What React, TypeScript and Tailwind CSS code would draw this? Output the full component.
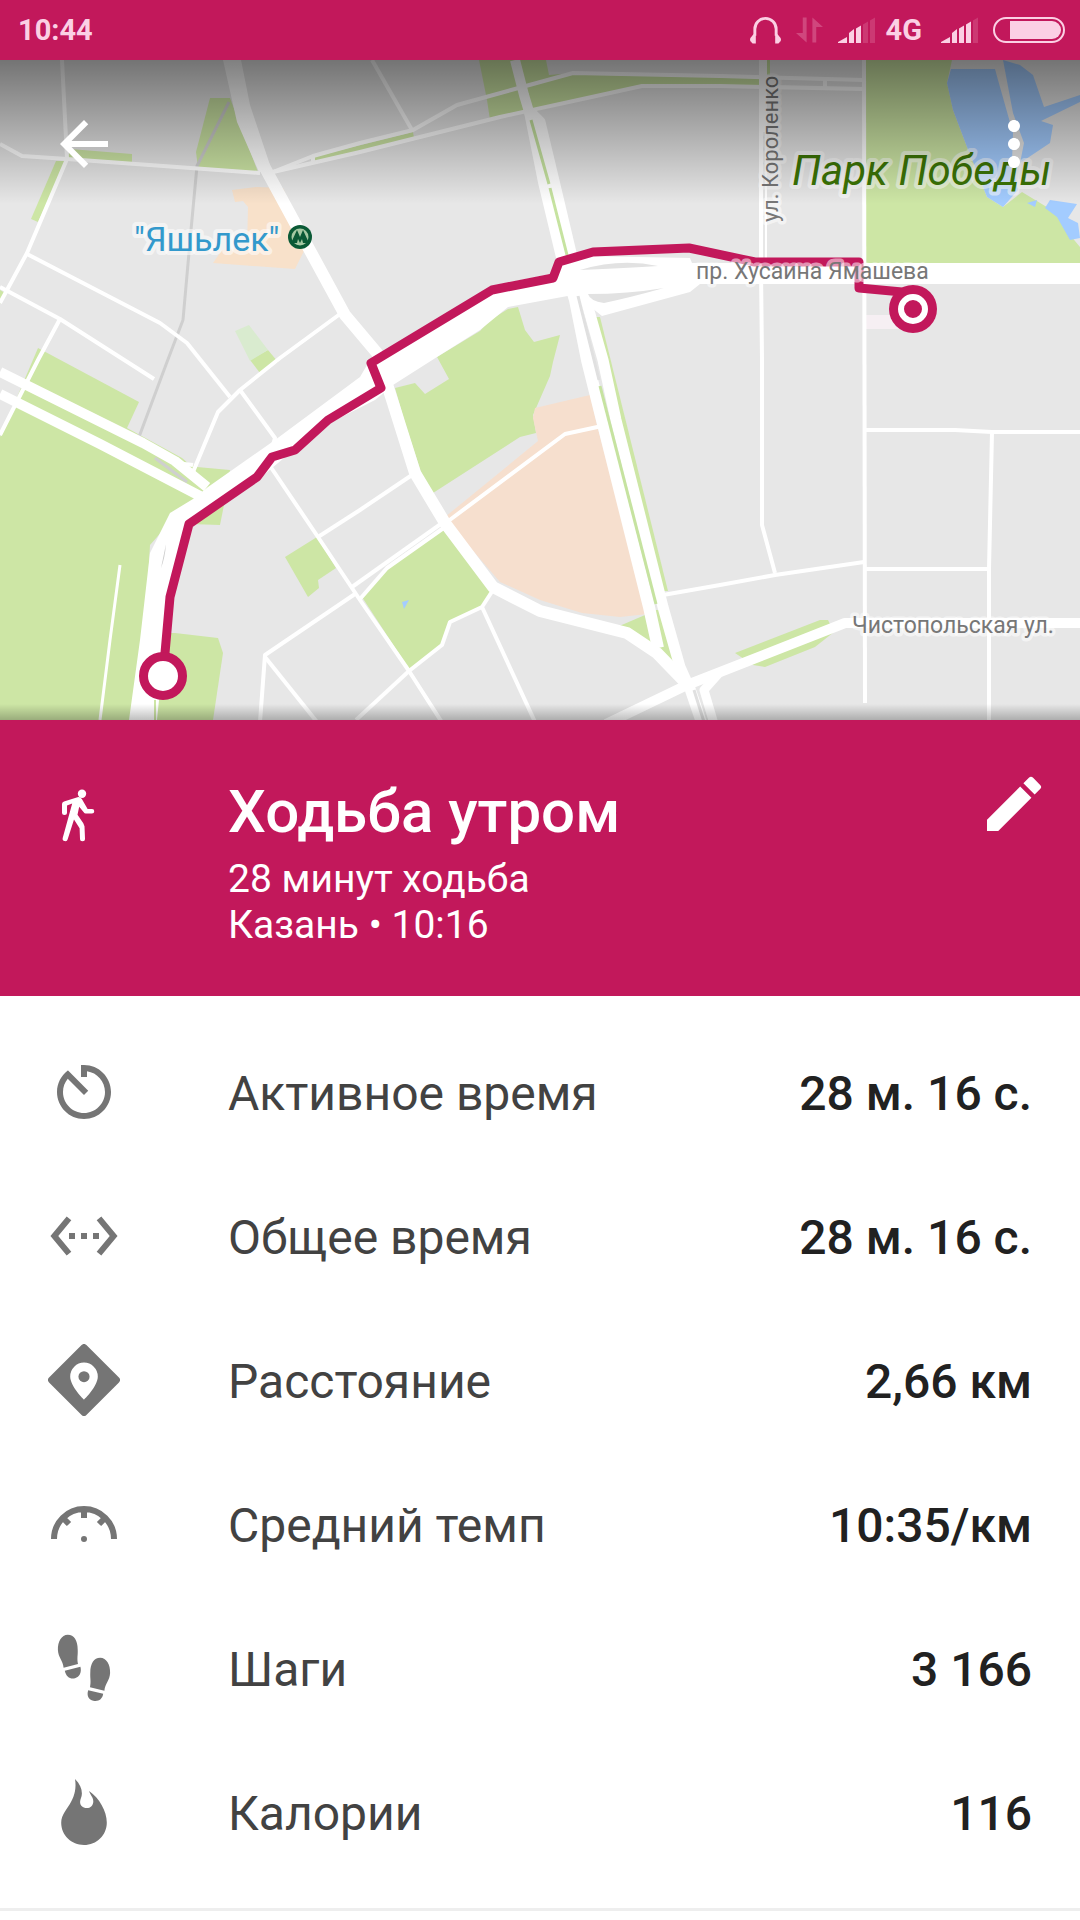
import React from 'react';
import { MdArrowBack, MdEdit, MdMoreVert } from 'react-icons/md';

type IconProps = { className?: string };

type Stat = {
	label: string;
	value: string;
	Icon: React.FC<IconProps>;
};

const TimerIcon = ({ className }: IconProps) => (
	<svg viewBox="0 0 24 24" fill="currentColor" className={className} aria-hidden="true">
		<path d="M11 3v4h2V5.08c3.39.49 6 3.39 6 6.92 0 3.87-3.13 7-7 7s-7-3.13-7-7c0-1.68.59-3.22 1.58-4.42L12 13l1.41-1.41-6.8-6.8v.02C4.42 6.45 3 9.05 3 12c0 4.97 4.02 9 9 9 4.97 0 9-4.03 9-9s-4.03-9-9-9h-1z" />
	</svg>
);

const DurationIcon = ({ className }: IconProps) => (
	<svg viewBox="0 0 24 24" fill="currentColor" className={className} aria-hidden="true">
		<path d="M7.77 6.76L6.23 5.48.82 12l5.41 6.52 1.54-1.28L3.42 12l4.35-5.24zM7 13h2v-2H7v2zm10-2h-2v2h2v-2zm-6 2h2v-2h-2v2zm6.77-7.52l-1.54 1.28L20.58 12l-4.35 5.24 1.54 1.28L23.18 12l-5.41-6.52z" />
	</svg>
);

const DistanceIcon = ({ className }: IconProps) => (
	<svg viewBox="0 0 24 24" fill="currentColor" className={className} aria-hidden="true">
		<path
			fillRule="evenodd"
			d="M11.2.35a1.15 1.15 0 0 1 1.6 0L23.65 11.2a1.15 1.15 0 0 1 0 1.6L12.8 23.65a1.15 1.15 0 0 1-1.6 0L.35 12.8a1.15 1.15 0 0 1 0-1.6zM12 6.2a4.6 4.6 0 0 0-4.6 4.6c0 3.3 4.6 7.7 4.6 7.7s4.6-4.4 4.6-7.7A4.6 4.6 0 0 0 12 6.2z"
		/>
		<circle cx="12" cy="10.9" r="1.85" />
	</svg>
);

const PaceIcon = ({ className }: IconProps) => (
	<svg
		viewBox="0 0 24 24"
		fill="none"
		stroke="currentColor"
		strokeWidth="2"
		className={className}
		aria-hidden="true"
	>
		<path d="M2 17a10 10 0 0 1 20 0M12 7v3M5 10l2 2M19 10l-2 2" />
		<circle cx="12" cy="17" r="1" fill="currentColor" stroke="none" />
	</svg>
);

const StepsIcon = ({ className }: IconProps) => (
	<svg viewBox="0 0 24 24" fill="currentColor" className={className} aria-hidden="true">
		<path d="M6.6.9C4.5.9 3.2 3.2 3.3 6c.1 2.5 1.700 3.5 1.900 5.900L10 10.700C9.600 8.700 10 7.800 9.900 5.800 9.900 2.900 8.700.9 6.600.9z" />
		<path d="M5.600 12.900l5.200-1.300c.5 1.900-.3 3.400-1.800 3.800-1.600.4-3-.5-3.400-2.500z" />
		<path d="M17.400 8.600c2.100 0 3.400 2.300 3.300 5.100-.1 2.500-1.700 3.500-1.900 5.900L14 18.400c.4-2 0-2.900.1-4.900 0-2.900 1.200-4.900 3.300-4.900z" />
		<path d="M18.400 20.600l-5-1.200c-.6 1.800.2 3.200 1.700 3.500 1.600.4 3-.4 3.300-2.300z" />
	</svg>
);

const CaloriesIcon = ({ className }: IconProps) => (
	<svg viewBox="0 0 24 24" fill="currentColor" className={className} aria-hidden="true">
		<path d="M9 1c1.600 1.600 2.300 3.200 2.300 4.800 0 1.200-.6 1.800-.6 2.900 0 1.200.9 2 2.200 2s2.200-.9 2.200-2.300c0-1.300-1-2-1.400-3.400 3.400 2.300 5.900 6.800 5.900 10.500 0 4.300-3.400 7.500-7.600 7.500s-7.600-3.200-7.600-7.400c0-2.700 2-4.500 3.300-7C8.900 6.400 9.500 3.900 9 1z" />
	</svg>
);

const WalkIcon = ({ className }: IconProps) => (
	<svg viewBox="0 0 72 72" fill="currentColor" className={className} aria-hidden="true">
		<circle cx="34" cy="15.800" r="4.200" />
		<path d="M29.500 19.200L16 23.500q-2 .6-2 2.500v8.500a2.500 2.500 0 0 0 5 0v-7l5.200-2L14.700 60a2.500 2.500 0 0 0 5 1.200L26 41.500l5.600 8.700.4 10.500a2.500 2.500 0 0 0 5 0l-.5-12.500-1.200-3-5.800-8.500 1.700-8 4.500 5.500q.8 1.300 2 1.300H44a2.200 2.200 0 0 0 0-4.500h-4.400l-5.600-9.800q-1.400-2.500-4.500-2z" />
	</svg>
);

const SignalIcon = ({ bars }: { bars: number }) => (
	<svg viewBox="0 0 37 26" fill="currentColor" className="w-[37px] h-[26px]" aria-hidden="true">
		<path d="M0 26v-1l9-5v6z" />
		<path d="M11 26V16l5-4v14z" />
		<path d="M18 26V11.500l5-3V26z" />
		<path d="M25 26V7.500l5-3V26z" opacity={bars > 3 ? 1 : 0.18} />
		<path d="M32 26V3.500l5-3V26z" opacity="0.18" />
	</svg>
);

const StatusBar = () => (
	<div className="flex items-center justify-between h-[60px] pl-[18px] pr-[15px] bg-[#c2185b] text-[#fbd0e4] text-[29px] leading-none font-bold">
		<span>10:44</span>
		<div className="flex items-center gap-[15px]">
			<svg viewBox="0 0 32 28" className="w-[31px] h-7" aria-hidden="true">
				<path d="M5 20v-7a11 11 0 0 1 22 0v7" fill="none" stroke="currentColor" strokeWidth="3" />
				<path d="M3.500 18.500H6V28H3q-1.500 0-1.500-1.500Q0 26 0 24t1.500-3zM28.500 18.500H26V28h3q1.500 0 1.500-1.500Q32 26 32 24t-1.500-3z" fill="currentColor" />
			</svg>
			<svg viewBox="0 0 28 26" fill="currentColor" className="h-[26px] w-[27px] opacity-25" aria-hidden="true">
				<path d="M7 0h4v26L0 16h7z" />
				<path d="M21 26h-4V0l11 10h-7z" />
			</svg>
			<SignalIcon bars={3} />
			<span className="-ml-1 mr-1">4G</span>
			<SignalIcon bars={4} />
			<svg viewBox="0 0 72 26" className="w-[72px] h-[26px]" aria-hidden="true">
				<rect x="1" y="1" width="70" height="24" rx="12" fill="none" stroke="currentColor" strokeWidth="2" />
				<path d="M17 4h42a9 9 0 0 1 0 18H17z" fill="currentColor" />
			</svg>
		</div>
	</div>
);

const greens = [
	'38,348 139,402 127,428 182,458 207,480 150,545 140,720 0,720 0,437',
	'180,460 197,467 230,470 225,500 220,525 190,524',
	'150,720 165,633 175,633 218,638 223,653 213,720',
	'285,557 317,537 336,568 318,580 319,588 308,597',
	'250,360 268,350 278,362 260,373',
	'0,290 5,293 0,304',
	'210,98 230,98 258,172 198,168 196,152',
	'70,149 132,154 132,163 67,160',
	'56,161 66,161 38,222 31,219',
	'313,157 413,132 414,138 314,163',
	'479,60 546,60 549,75 573,73 762,77 762,87 642,86 540,110 490,120 487,100',
	'765,60 770,60 770,75 765,75',
	'865,60 952,60 947,83 953,110 967,147 987,197 1003,207 1022,192 1055,212 1070,235 1080,247 1080,265 865,265',
	'437,357 480,331 490,320 508,309 518,307 525,330 534,342 560,335 553,362 550,376 533,415 536,433 520,437 433,493 422,475 405,423 395,388 415,383 425,394 449,379',
	'443,530 493,590 482,607 450,622 442,645 409,669 362,597 385,570',
	'617,627 645,615 655,648 635,637',
	'650,610 662,610 676,665 655,645',
	'592,317 600,317 668,591 660,591',
	'735,653 820,620 828,620 834,632 815,647 765,667 753,665',
];

const waters = [
	'951,69 995,69 998,80 1013,133 1012,162 1018,190 1003,207 987,197 967,147 953,110 947,83',
	'1003,60 1020,65 1033,75 1044,107 1080,95 1080,102 1041,121 1053,125 1050,143 1020,163 1024,143 1013,113',
	'1027,203 1037,200 1035,207',
	'1045,208 1050,200 1077,204 1068,218 1078,223 1080,238 1070,240 1057,217',
	'402,602 409,600 404,609',
];

const streets = [
	'62,60 67,158',
	'0,144 22,156 67,159 260,173',
	'67,159 27,253 0,303',
	'27,254 160,323 187,343 230,397',
	'0,287 60,319 154,379',
	'60,319 38,360 0,435',
	'340,314 280,358 240,390 218,412 193,472',
	'175,463 193,465',
	'240,390 275,438 268,463 318,537 360,600 409,671 443,724',
	'318,537 360,510 412,475',
	'352,587 445,521',
	'360,599 387,568 445,527',
	'355,594 265,655 260,722',
	'265,657 317,722',
	'493,590 482,607 450,622 442,645 409,671 356,720',
	'482,607 535,722',
	'447,522 565,434 602,426',
	'663,595 720,585 775,575 864,562',
	'761,270 762,360 762,525 775,573',
	'864,60 865,703',
	'864,430 955,430 992,432 1080,432',
	'992,432 989,569 989,722',
	'864,569 989,569',
	'273,172 313,156 360,143 413,130 457,105 573,73 720,76 864,80',
	'273,172 360,152 500,117 642,86 720,86 864,89',
	'313,156 313,163',
	'825,78 825,88',
	'372,60 412,130',
];

const TrackMap = () => (
	<svg
		viewBox="0 60 1080 660"
		preserveAspectRatio="xMidYMid slice"
		className="block w-full h-full"
		role="img"
		aria-label="Маршрут"
	>
		<rect x="0" y="60" width="1080" height="660" fill="#e7e7e7" />

		<g fill="#cde6a5">
			{greens.map((points) => (
				<polygon key={points} points={points} />
			))}
		</g>
		<polygon points="235,331 249,325 268,350 250,361" fill="#d9ebcf" />
		<polygon points="865,315 900,315 900,329 865,329" fill="#f6eff3" />
		<g fill="#a3ccff">
			{waters.map((points) => (
				<polygon key={points} points={points} />
			))}
		</g>
		<polygon
			points="535,408 590,395 597,425 648,614 620,617 582,613 540,600 500,582 455,530 445,517 538,441 533,418"
			fill="#f6dfce"
		/>
		<polygon
			points="232,190 257,187 283,188 307,245 295,269 213,263 222,250 247,248 248,207 243,201 235,202"
			fill="#f8e1ca"
		/>

		<g fill="none" stroke="#cfcfcf" strokeWidth="3">
			<polyline points="229,102 197,166 191,230 183,320 167,362 139,437" />
			<polyline points="155,458 187,482" />
		</g>

		<g fill="none" stroke="#fff" strokeWidth="4" strokeLinejoin="round">
			{streets.map((points) => (
				<polyline key={points} points={points} />
			))}
			<polyline points="120,565 110,640 100,720" strokeWidth="3" />
			<polyline points="763,60 763,265" strokeWidth="8" />
		</g>
		<path d="M764 132v130" stroke="#e7e7e7" strokeWidth="2" />

		{/* avenues */}
		<g fill="none" stroke="#fff" strokeLinejoin="round">
			<polyline points="0,372 143,443 175,461 207,487" strokeWidth="10" />
			<polyline points="0,394 100,444 200,496" strokeWidth="10" />
			<polyline points="264,166 345,315 377,353 393,403 415,473 445,523 493,587 540,611 627,633 657,653 687,684" strokeWidth="12" />
			<polyline points="515,60 524,95 530,115" strokeWidth="10" />
			<polyline points="530,112 544,182 562,257 575,300 587,360 602,420 649,607 658,648" strokeWidth="12" />
			<polyline points="530,112 540,122 555,185 572,257 586,300 603,360 616,420 663,607 680,667 688,685" strokeWidth="11" />
			<polyline points="606,724 687,685 845,623 1080,623" strokeWidth="10" />
			<polyline points="687,680 702,724" strokeWidth="11" />
			<polyline points="720,672 704,690 714,724" strokeWidth="9" />
		</g>
		<polygon points="223,60 241,60 250,105 271,168 259,172 237,122" fill="#fff" />
		<polygon
			points="129,720 140,640 150,553 170,513 193,499 208,487 275,440 360,377 370,360 495,285 560,272 585,256 690,258 692,263 1080,263 1080,284 700,284 690,292 602,316 592,308 588,294 573,295 508,307 480,330 437,357 393,385 375,400 320,428 260,478 190,525 173,600 164,650 157,720"
			fill="#fff"
		/>
		<path d="M580 270q40-12 78-4q-30 2-78 4zM588 294q40 0 76-6q-36 10-60 15q-14-2-16-9z" fill="#e2e2e2" />
		<path d="M161 568l5-24q-1 14-5 24z" fill="#ccc" />
		<path d="M155 700v20" stroke="#cde6a5" strokeWidth="2" />

		{/* median strips */}
		<g fill="none" stroke="#c6e3a0" strokeWidth="3">
			<path d="M531 120L549 184M550 188L567 255" />
			<path d="M600 386L656 604" />
		</g>
		<path d="M578 296L599 380M694 690L704 722" stroke="#e0e0e0" strokeWidth="3" />

		<g className="[font-family:Roboto,sans-serif]">
			<polyline
				points="163,676 165,653 170,597 189,524 257,477 272,457 295,450 328,420 381,388 371,363 492,290 553,278 559,262 593,252 689,248 755,262 859,262 859,288 913,293"
				fill="none"
				stroke="#c2185b"
				strokeWidth="9"
				strokeLinejoin="round"
			/>
			<g strokeLinejoin="round" className="[paint-order:stroke]">
				<g stroke="#fff" strokeOpacity="0.55" strokeWidth="8">
					<text x="134" y="251" fontSize="34" fill="#3399cc">"Яшьлек"</text>
					<text x="792" y="185" fontSize="42" fontStyle="italic" fill="#3c7505">Парк Победы</text>
				</g>
				<g stroke="#fff" strokeOpacity="0.55" strokeWidth="7" fontSize="23" fill="#777">
					<text x="696" y="279">пр. Хусаина Ямашева</text>
					<text x="852" y="633">Чистопольская ул.</text>
					<text transform="translate(778 222) rotate(-90)" fontSize="22">ул. Короленко</text>
				</g>
			</g>
		</g>

		{/* metro */}
		<circle cx="300" cy="237" r="12" fill="#0b5a36" />
		<circle cx="300" cy="237" r="8.500" fill="#a5c9a3" />
		<path d="M291 243l6-13 3 7 3-7 6 13h-6l-1-4-2 4-2-4-1 4z" fill="#0b5a36" />

		<circle cx="163" cy="676" r="19.500" fill="#fff" stroke="#c2185b" strokeWidth="9" />
		<circle cx="913" cy="309" r="24" fill="#c2185b" />
		<circle cx="913" cy="309" r="12" fill="#c2185b" stroke="#fff" strokeWidth="6" />
	</svg>
);

const stats: Stat[] = [
	{ label: 'Активное время', value: '28 м. 16 с.', Icon: TimerIcon },
	{ label: 'Общее время', value: '28 м. 16 с.', Icon: DurationIcon },
	{ label: 'Расстояние', value: '2,66 км', Icon: DistanceIcon },
	{ label: 'Средний темп', value: '10:35/км', Icon: PaceIcon },
	{ label: 'Шаги', value: '3 166', Icon: StepsIcon },
	{ label: 'Калории', value: '116', Icon: CaloriesIcon },
];

const App = () => {
	return (
		<div className="min-h-screen bg-white [font-family:Roboto,sans-serif]">
			<StatusBar />

			<section className="relative h-[660px] overflow-hidden">
				<TrackMap />
				<div className="absolute inset-x-0 top-0 h-36 bg-linear-to-b from-black/50 to-transparent" />
				<div className="absolute inset-x-0 bottom-0 h-4 bg-linear-to-t from-black/25 to-transparent" />
				<div className="absolute inset-x-0 top-12 flex justify-between pl-12 pr-[30px] text-white">
					<button type="button" aria-label="Назад">
						<MdArrowBack className="size-[72px]" />
					</button>
					<button type="button" aria-label="Ещё">
						<MdMoreVert className="size-[72px]" />
					</button>
				</div>
			</section>

			<header className="flex items-start pt-12 pb-12 pl-12 pr-[30px] bg-[#c2185b] text-white">
				<WalkIcon className="size-[72px] mt-2.5 shrink-0" />
				<div className="flex-1 pt-3 ml-[108px]">
					<h1 className="text-[60px] leading-[64px] font-medium">Ходьба утром</h1>
					<p className="mt-3 text-[39px] leading-[46px]">28 минут ходьба</p>
					<p className="text-[39px] leading-[46px]">Казань • 10:16</p>
				</div>
				<button type="button" aria-label="Изменить">
					<MdEdit className="size-[72px]" />
				</button>
			</header>

			<dl className="py-6 border-b-3 border-[#eee]">
				{stats.map(({ label, value, Icon }) => (
					<div key={label} className="flex items-center h-36 pl-12 pr-12 text-[48px]">
						<Icon className="size-[72px] shrink-0 text-[#757575]" />
						<dt className="flex-1 pt-1 ml-[108px] text-[#424242]">{label}</dt>
						<dd className="pt-1 font-medium text-[#212121]">{value}</dd>
					</div>
				))}
			</dl>
		</div>
	);
};

export default App;
